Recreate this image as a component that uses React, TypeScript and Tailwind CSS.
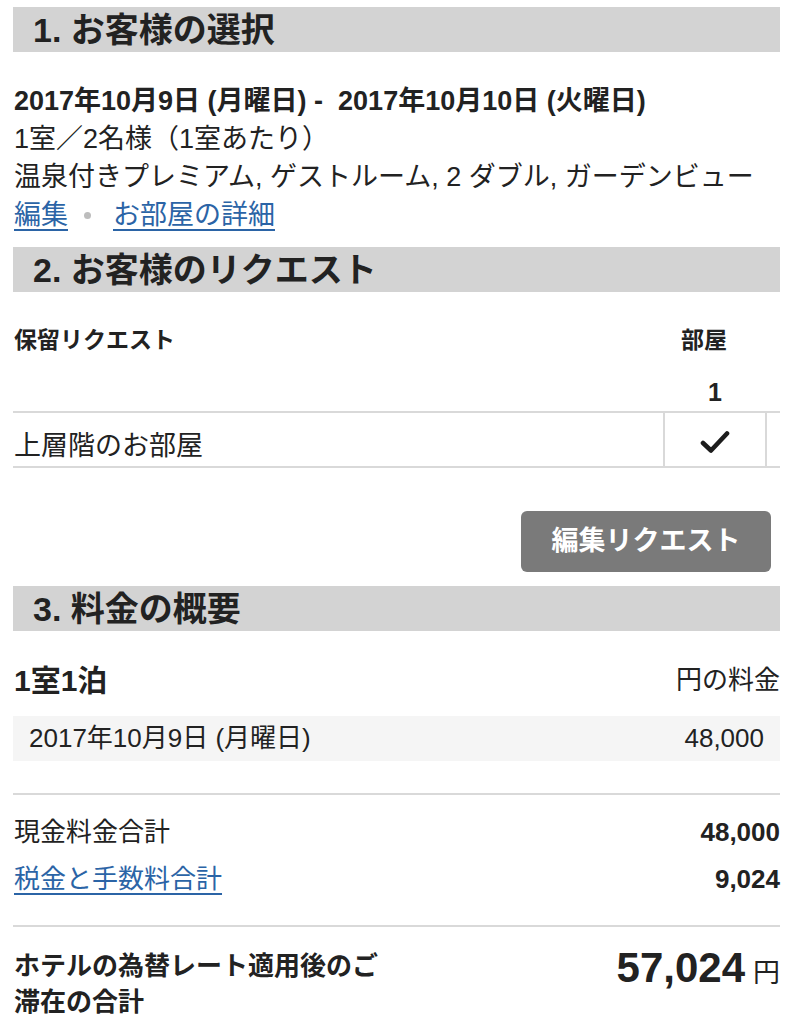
import React from 'react';

const SectionHeader: React.FC<{ title: string }> = ({ title }) => (
  <div className="h-[45px] bg-[#d3d3d3] pl-[20px] flex items-center">
    <h2 className="text-[34px] font-bold leading-none text-[#222]">{title}</h2>
  </div>
);

const Check = () => (
  <svg width="30" height="24" viewBox="0 0 30 24" fill="none">
    <path d="M3 13 L11 20.5 L27 3.5" stroke="#1c1c1c" strokeWidth="4.6" strokeLinecap="round" strokeLinejoin="round" />
  </svg>
);

const App: React.FC = () => {
  return (
    <div className="w-[794px] bg-white text-[#222] font-['Liberation_Sans','Noto_Sans_CJK_JP',sans-serif]">
      <div className="pl-[13px] pr-[14px] pt-[7px] pb-[10px]">
        {/* 1. selection */}
        <SectionHeader title="1. お客様の選択" />
        <div className="pt-[30px] pl-[1px] text-[27px] leading-[38px]">
          <p className="font-bold">2017年10月9日 (月曜日) -&nbsp; 2017年10月10日 (火曜日)</p>
          <p>1室／2名様（1室あたり）</p>
          <p className="whitespace-nowrap">温泉付きプレミアム, ゲストルーム, 2 ダブル, ガーデンビュー</p>
          <p className="flex items-center">
            <a className="text-[#2b64a6] underline underline-offset-[5px] decoration-[2px]">編集</a>
            <span className="ml-[16px] mr-[22px] w-[7px] h-[7px] rounded-full bg-[#bdbdbd]" />
            <a className="text-[#2b64a6] underline underline-offset-[5px] decoration-[2px]">お部屋の詳細</a>
          </p>
        </div>

        {/* 2. requests */}
        <div className="mt-[13px]">
          <SectionHeader title="2. お客様のリクエスト" />
        </div>
        <div className="pt-[33px]">
          <div className="grid grid-cols-[1fr_104px_13px]">
            <div className="pl-[1px] h-[30px] flex items-center text-[23px] font-bold">保留リクエスト</div>
            <div className="h-[30px] flex items-center pl-[18px] text-[23px] font-bold">部屋</div>
            <div />
            <div className="mt-[23px] h-[30px]" />
            <div className="mt-[23px] h-[30px] flex items-center justify-center text-[25px] font-bold">1</div>
            <div className="mt-[23px] h-[30px]" />
          </div>
          <div className="mt-[3px] grid grid-cols-[1fr_104px_13px] h-[57px] border-y-2 border-[#d9d9d9]">
            <div className="pl-[1px] pt-[18px] text-[27px] leading-[30px]">上層階のお部屋</div>
            <div className="border-x-2 border-[#d9d9d9] flex items-center justify-center pt-[5px]">
              <Check />
            </div>
            <div />
          </div>
        </div>
        <div className="flex justify-end pr-[9px] mt-[43px]">
          <button className="w-[250px] h-[61px] rounded-[6px] bg-[#7a7a7a] text-white text-[27px] font-bold">
            編集リクエスト
          </button>
        </div>

        {/* 3. price summary */}
        <div className="mt-[14px]">
          <SectionHeader title="3. 料金の概要" />
        </div>
        <div className="mt-[32px] flex items-center justify-between h-[34px]">
          <span className="pl-[1px] text-[30px] font-bold">1室1泊</span>
          <span className="text-[26px]">円の料金</span>
        </div>
        <div className="mt-[19px] h-[45px] bg-[#f5f5f5] flex items-center justify-between pl-[16px] pr-[16px] text-[26px]">
          <span>2017年10月9日 (月曜日)</span>
          <span>48,000</span>
        </div>
        <div className="mt-[32px] border-t-2 border-[#d9d9d9]" />
        <div className="pt-[14px] text-[26px] leading-[47px]">
          <div className="flex justify-between">
            <span className="pl-[1px]">現金料金合計</span>
            <span className="font-bold">48,000</span>
          </div>
          <div className="flex justify-between">
            <a className="pl-[1px] text-[#2b64a6] underline underline-offset-[5px] decoration-[2px]">税金と手数料合計</a>
            <span className="font-bold">9,024</span>
          </div>
        </div>
        <div className="mt-[22px] border-t-2 border-[#d9d9d9]" />
        <div className="pt-[21px] flex justify-between items-start">
          <p className="pl-[1px] w-[385px] text-[26px] leading-[36px] font-bold">
            ホテルの為替レート適用後のご滞在の合計
          </p>
          <p className="flex items-baseline">
            <span className="text-[42px] font-bold leading-[40px]">57,024</span>
            <span className="ml-[8px] text-[27px]">円</span>
          </p>
        </div>
      </div>
    </div>
  );
};

export default App;
